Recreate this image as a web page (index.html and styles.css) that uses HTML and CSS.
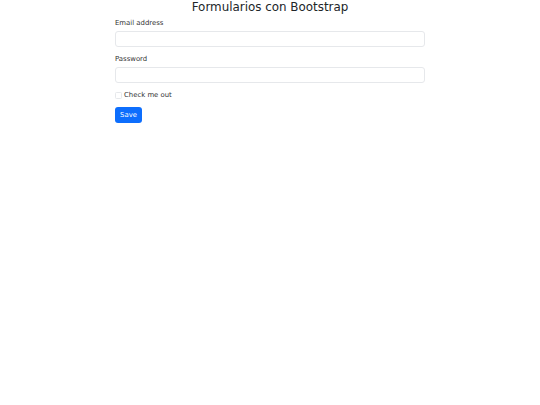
FILE: index.html
```html
<!DOCTYPE html>
<html lang="es">
<head>
    <meta charset="UTF-8">
    <meta name="viewport" content="width=device-width, initial-scale=1.0">
    <title>Formularios con Bootstrap</title>
    <link rel="stylesheet" href="styles.css">
</head>
<body>
    <div class="container">
        <h1 class="page-title">Formularios con Bootstrap</h1>
        <form class="form">
            <div class="field">
                <label for="email" class="form-label">Email address</label>
                <input type="email" id="email" class="form-control">
            </div>
            <div class="field">
                <label for="password" class="form-label">Password</label>
                <input type="password" id="password" class="form-control">
            </div>
            <div class="form-check">
                <input type="checkbox" id="check" class="check-input">
                <label for="check" class="check-label">Check me out</label>
            </div>
            <button type="submit" class="btn-primary">Save</button>
        </form>
    </div>
</body>
</html>
```

FILE: styles.css
```css
* {
    margin: 0;
    padding: 0;
    box-sizing: border-box;
}

body {
    font-family: "DejaVu Sans", sans-serif;
    background: #fff;
    color: #212529;
}

.container {
    width: 310px;
    margin: 0 auto;
}

.page-title {
    font-size: 11.9px;
    font-weight: normal;
    text-align: center;
    line-height: 14px;
}

.form {
    padding-top: 4px;
}

.field {
    margin-bottom: 7px;
}

.form-label {
    display: block;
    font-size: 6.9px;
    line-height: 10px;
    margin-bottom: 3px;
    color: #333;
}

.form-control {
    display: block;
    width: 100%;
    height: 16px;
    border: 1px solid #e6e8eb;
    border-radius: 3px;
    background: #fff;
}

.form-check {
    display: flex;
    align-items: center;
    gap: 2px;
    margin-top: 8px;
    margin-bottom: 8px;
    font-size: 6.9px;
    height: 8px;
    color: #333;
}

.check-input {
    appearance: none;
    width: 7px;
    height: 7px;
    border: 1px solid #e6e8eb;
    border-radius: 1.5px;
    background: #fff;
}

.btn-primary {
    display: block;
    width: 27px;
    height: 16px;
    font-family: inherit;
    font-size: 6.9px;
    color: #fff;
    background: #0d6efd;
    border: none;
    border-radius: 3px;
}
```
